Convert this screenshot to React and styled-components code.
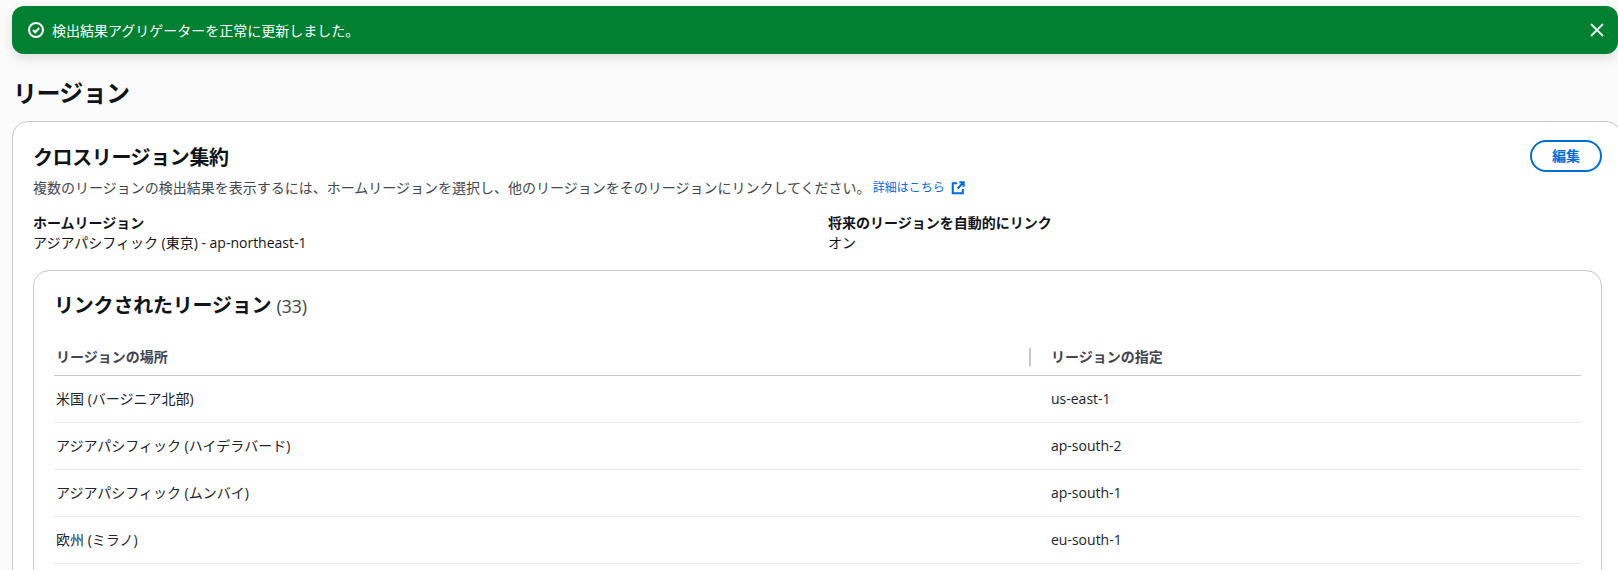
import React from 'react'
import styled, { createGlobalStyle } from 'styled-components'

const GlobalStyle = createGlobalStyle`
  html, body {
    margin: 0;
    height: 570px;
    overflow: hidden;
    background: #fbfbfb;
  }
  body {
    font-family: "Open Sans", "Noto Sans CJK JP", sans-serif;
    color: #0f141a;
  }
`

const Page = styled.div`
  width: 1650px;
  padding: 6px 0 0 12px;
  box-sizing: border-box;
`

const Flash = styled.div`
  width: 1606px;
  height: 48px;
  box-sizing: border-box;
  display: flex;
  align-items: center;
  gap: 8px;
  padding: 0 14px 0 16px;
  background: #008030;
  border-radius: 12px;
  box-shadow: 0 4px 12px rgba(0, 7, 22, 0.12);
  color: #fff;
  font-size: 14px;
`

const FlashText = styled.span`
  flex: 1;
`

const CloseButton = styled.button`
  display: flex;
  padding: 0;
  border: 0;
  background: none;
  color: #f0f0f0;
`

const PageTitle = styled.h1`
  margin: 22px 0 12px 1px;
  height: 33px;
  line-height: 33px;
  font-size: 24px;
  font-weight: 700;
  letter-spacing: -0.6px;
`

const Card = styled.section`
  width: 1610px;
  box-sizing: border-box;
  padding: 20px 19px 40px 20px;
  background: #fff;
  border: 1px solid #c6c6cd;
  border-radius: 16px;
`

const CardHeader = styled.div`
  display: flex;
  justify-content: space-between;
  align-items: flex-start;
`

const CardTitle = styled.h2`
  margin: 0;
  height: 32px;
  line-height: 32px;
  font-size: 20px;
  font-weight: 700;
  letter-spacing: -0.4px;
`

const Description = styled.p`
  margin: 4px 0 0;
  height: 20px;
  line-height: 20px;
  font-size: 14px;
  color: #424650;
`

const InfoLink = styled.a`
  display: inline-flex;
  align-items: center;
  gap: 6px;
  margin-left: 2px;
  font-size: 12px;
  color: #006ce0;
  vertical-align: top;
`

const EditButton = styled.button`
  width: 72px;
  height: 32px;
  margin-top: -2px;
  padding: 0 0 2px;
  background: #fff;
  border: 2px solid #006ce0;
  border-radius: 20px;
  color: #006ce0;
  font: inherit;
  font-size: 14px;
  font-weight: 700;
`

const Details = styled.div`
  display: grid;
  grid-template-columns: 795px 1fr;
  margin-top: 15px;
`

const Label = styled.div`
  line-height: 20px;
  font-size: 14px;
  font-weight: 700;
`

const Value = styled.div`
  line-height: 20px;
  font-size: 14px;
`

const InnerCard = styled.section`
  width: 1569px;
  box-sizing: border-box;
  margin-top: 17px;
  padding: 21px 20px 30px 20px;
  border: 1px solid #c6c6cd;
  border-radius: 16px;
`

const TableTitle = styled.h2`
  margin: 0;
  height: 28px;
  line-height: 28px;
  font-size: 20px;
  font-weight: 700;
  letter-spacing: -0.2px;
`

const Count = styled.span`
  font-weight: 400;
  color: #424650;
  font-size: 18px;
`

const Table = styled.div`
  margin-top: 18px;
`

const Row = styled.div`
  display: grid;
  grid-template-columns: 975px 1fr;
  height: ${p => (p.$head ? '38px' : '47px')};
  box-sizing: border-box;
  align-items: center;
  border-bottom: 1px solid ${p => (p.$head ? '#c6c6cd' : '#e8e8ed')};
  font-size: 14px;
  color: ${p => (p.$head ? '#424650' : '#1b232d')};
  font-weight: ${p => (p.$head ? 700 : 400)};
`

const Cell = styled.div`
  padding-left: ${p => (p.$second ? '22px' : '2px')};
  line-height: 20px;
  ${p => p.$divider && `
    border-left: 2px solid #c6c6cd;
    padding-left: 20px;
    height: 18px;
    line-height: 18px;
  `}
`

const regions = [
  ['米国 (バージニア北部)', 'us-east-1'],
  ['アジアパシフィック (ハイデラバード)', 'ap-south-2'],
  ['アジアパシフィック (ムンバイ)', 'ap-south-1'],
  ['欧州 (ミラノ)', 'eu-south-1'],
]

const CheckIcon = () => (
  <svg width="16" height="16" viewBox="0 0 16 16" fill="none" stroke="currentColor" strokeWidth="2">
    <circle cx="8" cy="8" r="7" />
    <path d="M5 8l2.2 2.2L11.2 6" />
  </svg>
)

const CloseIcon = () => (
  <svg width="14" height="14" viewBox="0 0 14 14" fill="none" stroke="currentColor" strokeWidth="1.8">
    <path d="M1 1l12 12M13 1L1 13" />
  </svg>
)

const ExternalIcon = () => (
  <svg width="14" height="14" viewBox="0 0 16 16" fill="none" stroke="currentColor" strokeWidth="2.4">
    <path d="M7 2.5H2v11.5h11.5V9" />
    <path d="M9.5 1.5h5v5M14.5 1.5L7.5 8.5" />
  </svg>
)

const App = () => {
  return (
    <Page>
      <GlobalStyle />
      <Flash>
        <CheckIcon />
        <FlashText>検出結果アグリゲーターを正常に更新しました。</FlashText>
        <CloseButton><CloseIcon /></CloseButton>
      </Flash>
      <PageTitle>リージョン</PageTitle>
      <Card>
        <CardHeader>
          <CardTitle>クロスリージョン集約</CardTitle>
          <EditButton>編集</EditButton>
        </CardHeader>
        <Description>
          複数のリージョンの検出結果を表示するには、ホームリージョンを選択し、他のリージョンをそのリージョンにリンクしてください。
          <InfoLink>詳細はこちら <ExternalIcon /></InfoLink>
        </Description>
        <Details>
          <div>
            <Label>ホームリージョン</Label>
            <Value>アジアパシフィック (東京) - ap-northeast-1</Value>
          </div>
          <div>
            <Label>将来のリージョンを自動的にリンク</Label>
            <Value>オン</Value>
          </div>
        </Details>
        <InnerCard>
          <TableTitle>リンクされたリージョン <Count>(33)</Count></TableTitle>
          <Table>
            <Row $head>
              <Cell>リージョンの場所</Cell>
              <Cell $second $divider>リージョンの指定</Cell>
            </Row>
            {regions.map(r => (
              <Row key={r[1]}>
                <Cell>{r[0]}</Cell>
                <Cell $second>{r[1]}</Cell>
              </Row>
            ))}
          </Table>
        </InnerCard>
      </Card>
    </Page>
  )
}

export default App
